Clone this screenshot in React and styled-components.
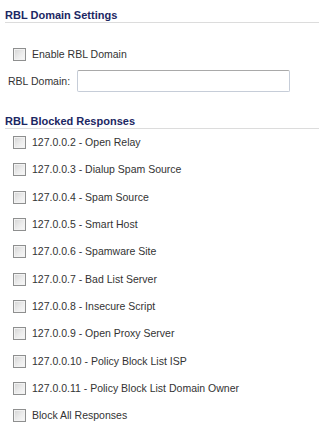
import styled, { createGlobalStyle } from "styled-components";

const GlobalStyle = createGlobalStyle`
  body {
    margin: 0;
    background: #ffffff;
    font-family: "Liberation Sans", Arial, sans-serif;
    font-size: 10.5px;
    color: #333333;
  }
`;

const Page = styled.div`
  width: 319px;
  height: 429px;
  overflow: hidden;
  padding-left: 5px;
  box-sizing: border-box;
`;

const SectionTitle = styled.div`
  margin-top: ${(props) => props.$mt || "8px"};
  height: 14px;
  line-height: 14px;
  font-size: 11px;
  font-weight: bold;
  color: #1b2763;
  border-bottom: 1px solid #dcdcdc;
`;

const SettingsBody = styled.div`
  padding-top: 20px;
  display: flex;
  flex-direction: column;
  gap: 4px;
`;

const CheckRow = styled.label`
  display: flex;
  align-items: center;
  gap: 6px;
  padding-left: 8px;
  height: ${(props) => props.$h || "27.3px"};
  line-height: 13px;
`;

const Box = styled.input.attrs({ type: "checkbox" })`
  appearance: none;
  -webkit-appearance: none;
  margin: 0;
  width: 13px;
  height: 13px;
  flex: none;
  box-sizing: border-box;
  border: 1px solid #8e8f8f;
  background: linear-gradient(135deg, #d4d4d4 0%, #ececec 55%, #f8f8f8 100%);
  box-shadow: inset 0 0 0 1px #f2f2f2;
`;

const FieldRow = styled.div`
  display: flex;
  align-items: center;
  height: 22px;
  padding-left: 3px;
`;

const FieldLabel = styled.span`
  width: 69px;
  flex: none;
`;

const TextInput = styled.input`
  width: 213px;
  height: 22px;
  box-sizing: border-box;
  border: 1px solid #c6cdd8;
  border-top-color: #a9a9a9;
  border-radius: 2px;
  padding: 2px 4px;
  font: inherit;
  outline: none;
`;

const List = styled.div`
  display: flex;
  flex-direction: column;
`;

const responses = [
  "127.0.0.2 - Open Relay",
  "127.0.0.3 - Dialup Spam Source",
  "127.0.0.4 - Spam Source",
  "127.0.0.5 - Smart Host",
  "127.0.0.6 - Spamware Site",
  "127.0.0.7 - Bad List Server",
  "127.0.0.8 - Insecure Script",
  "127.0.0.9 - Open Proxy Server",
  "127.0.0.10 - Policy Block List ISP",
  "127.0.0.11 - Policy Block List Domain Owner",
  "Block All Responses",
];

export default function App() {
  return (
    <>
      <GlobalStyle />
      <Page>
        <SectionTitle>RBL Domain Settings</SectionTitle>
        <SettingsBody>
          <CheckRow $h="23px">
            <Box />
            Enable RBL Domain
          </CheckRow>
          <FieldRow>
            <FieldLabel>RBL Domain:</FieldLabel>
            <TextInput type="text" />
          </FieldRow>
        </SettingsBody>
        <SectionTitle $mt="22px">RBL Blocked Responses</SectionTitle>
        <List>
          {responses.map((r) => (
            <CheckRow key={r}>
              <Box />
              {r}
            </CheckRow>
          ))}
        </List>
      </Page>
    </>
  );
}
